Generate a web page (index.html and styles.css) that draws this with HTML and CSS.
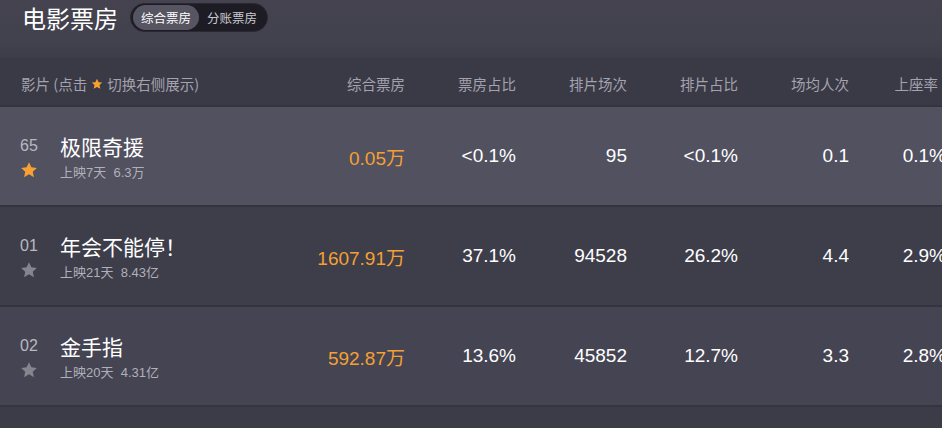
FILE: index.html
```html
<!DOCTYPE html>
<html lang="zh">
<head>
<meta charset="utf-8">
<link rel="stylesheet" href="styles.css">
</head>
<body>
<div class="page">
  <header class="topbar">
    <h1 class="title">电影票房</h1>
    <div class="toggle">
      <span class="seg active">综合票房</span>
      <span class="seg">分账票房</span>
    </div>
  </header>
  <div class="table">
    <div class="row head">
      <div class="c-film">影片 (点击 <svg class="hstar" viewBox="0 0 24 24"><path d="M12 1.5l3.2 6.9 7.3.8-5.5 5 1.6 7.4L12 17.8l-6.6 3.8 1.6-7.4-5.5-5 7.3-.8z"/></svg> 切换右侧展示)</div>
      <div class="c">综合票房</div>
      <div class="c">票房占比</div>
      <div class="c">排片场次</div>
      <div class="c">排片占比</div>
      <div class="c">场均人次</div>
      <div class="c last">上座率</div>
    </div>
    <div class="row item hl">
      <div class="c-film">
        <div class="rank"><span class="num">65</span><svg class="star on" viewBox="0 0 24 24"><path d="M12 1.5l3.2 6.9 7.3.8-5.5 5 1.6 7.4L12 17.8l-6.6 3.8 1.6-7.4-5.5-5 7.3-.8z"/></svg></div>
        <div class="info"><div class="name">极限奇援</div><div class="sub">上映7天&nbsp;&nbsp;6.3万</div></div>
      </div>
      <div class="c v orange">0.05万</div>
      <div class="c v">&lt;0.1%</div>
      <div class="c v">95</div>
      <div class="c v">&lt;0.1%</div>
      <div class="c v">0.1</div>
      <div class="c v">0.1%</div>
    </div>
    <div class="row item r2">
      <div class="c-film">
        <div class="rank"><span class="num">01</span><svg class="star" viewBox="0 0 24 24"><path d="M12 1.5l3.2 6.9 7.3.8-5.5 5 1.6 7.4L12 17.8l-6.6 3.8 1.6-7.4-5.5-5 7.3-.8z"/></svg></div>
        <div class="info"><div class="name">年会不能停！</div><div class="sub">上映21天&nbsp;&nbsp;8.43亿</div></div>
      </div>
      <div class="c v orange">1607.91万</div>
      <div class="c v">37.1%</div>
      <div class="c v">94528</div>
      <div class="c v">26.2%</div>
      <div class="c v">4.4</div>
      <div class="c v">2.9%</div>
    </div>
    <div class="row item r3">
      <div class="c-film">
        <div class="rank"><span class="num">02</span><svg class="star" viewBox="0 0 24 24"><path d="M12 1.5l3.2 6.9 7.3.8-5.5 5 1.6 7.4L12 17.8l-6.6 3.8 1.6-7.4-5.5-5 7.3-.8z"/></svg></div>
        <div class="info"><div class="name">金手指</div><div class="sub">上映20天&nbsp;&nbsp;4.31亿</div></div>
      </div>
      <div class="c v orange">592.87万</div>
      <div class="c v">13.6%</div>
      <div class="c v">45852</div>
      <div class="c v">12.7%</div>
      <div class="c v">3.3</div>
      <div class="c v">2.8%</div>
    </div>
  </div>
</div>
</body>
</html>
```

FILE: styles.css
```css
* { box-sizing: border-box; }
html, body {
  margin: 0;
  padding: 0;
  background: #3c3b48;
  overflow: hidden;
}
body {
  font-family: "Liberation Sans", "Noto Sans CJK SC", sans-serif;
  color: #ffffff;
}
.page {
  width: 942px;
  height: 428px;
  overflow: hidden;
  background: #3c3b48;
}
.topbar {
  height: 58px;
  background: linear-gradient(#44434f 0, #42414e 40px, #3d3c49 58px);
  display: flex;
  align-items: flex-start;
  padding: 3px 0 0 22px;
  gap: 12px;
}
.title {
  margin: 0;
  font-family: "Noto Sans CJK SC", sans-serif;
  font-size: 24px;
  font-weight: 400;
  line-height: 29px;
  color: #ffffff;
}
.toggle {
  display: flex;
  align-items: center;
  height: 29px;
  padding: 2px;
  border-radius: 15px;
  background: #1d1c25;
  border: 1px solid #2a2933;
}
.seg {
  font-family: "Noto Sans CJK SC", sans-serif;
  font-size: 12.5px;
  line-height: 25px;
  padding: 0 8px;
  color: #c9c8d0;
  border-radius: 13px;
}
.seg.active {
  background: #565561;
  color: #ffffff;
}
.table {
  width: 960px;
}
.row {
  display: grid;
  grid-template-columns: 294px repeat(5, 111px) 97px;
  align-items: center;
  border-bottom: 2px solid #34333e;
}
.head {
  height: 49px;
  background: #3a3946;
  font-family: "Noto Sans CJK SC", sans-serif;
  font-size: 14.5px;
  color: #a3a2ad;
  padding-top: 4px;
}
.head .c-film {
  padding-left: 21px;
  display: flex;
  align-items: center;
  gap: 4px;
}
.hstar {
  width: 12px;
  height: 12px;
  fill: #f5a12f;
}
.c {
  text-align: right;
}
.head .last {
  padding-right: 8px;
}
.item {
  height: 100px;
}
.hl { background: #52515f; }
.r2 { background: #3e3d4a; }
.r3 { background: #454452; }
.item .c-film {
  align-self: start;
  display: flex;
  align-items: flex-start;
  padding: 25px 0 0 20px;
}
.rank {
  width: 40px;
  padding-top: 4px;
  display: flex;
  flex-direction: column;
  align-items: flex-start;
}
.num {
  font-size: 16px;
  line-height: 20px;
  color: #b9b8c2;
}
.star {
  width: 18px;
  height: 18px;
  margin-top: 5px;
  fill: #85848f;
}
.star.on { fill: #f7a033; }
.info {
  display: flex;
  flex-direction: column;
}
.name {
  font-family: "Noto Sans CJK SC", sans-serif;
  font-size: 21px;
  line-height: 28px;
  color: #ffffff;
}
.sub {
  margin-top: 4px;
  font-size: 13px;
  line-height: 18px;
  color: #b1b0ba;
}
.v {
  font-size: 19px;
  color: #ffffff;
}
.orange { color: #f4a033; }
```
